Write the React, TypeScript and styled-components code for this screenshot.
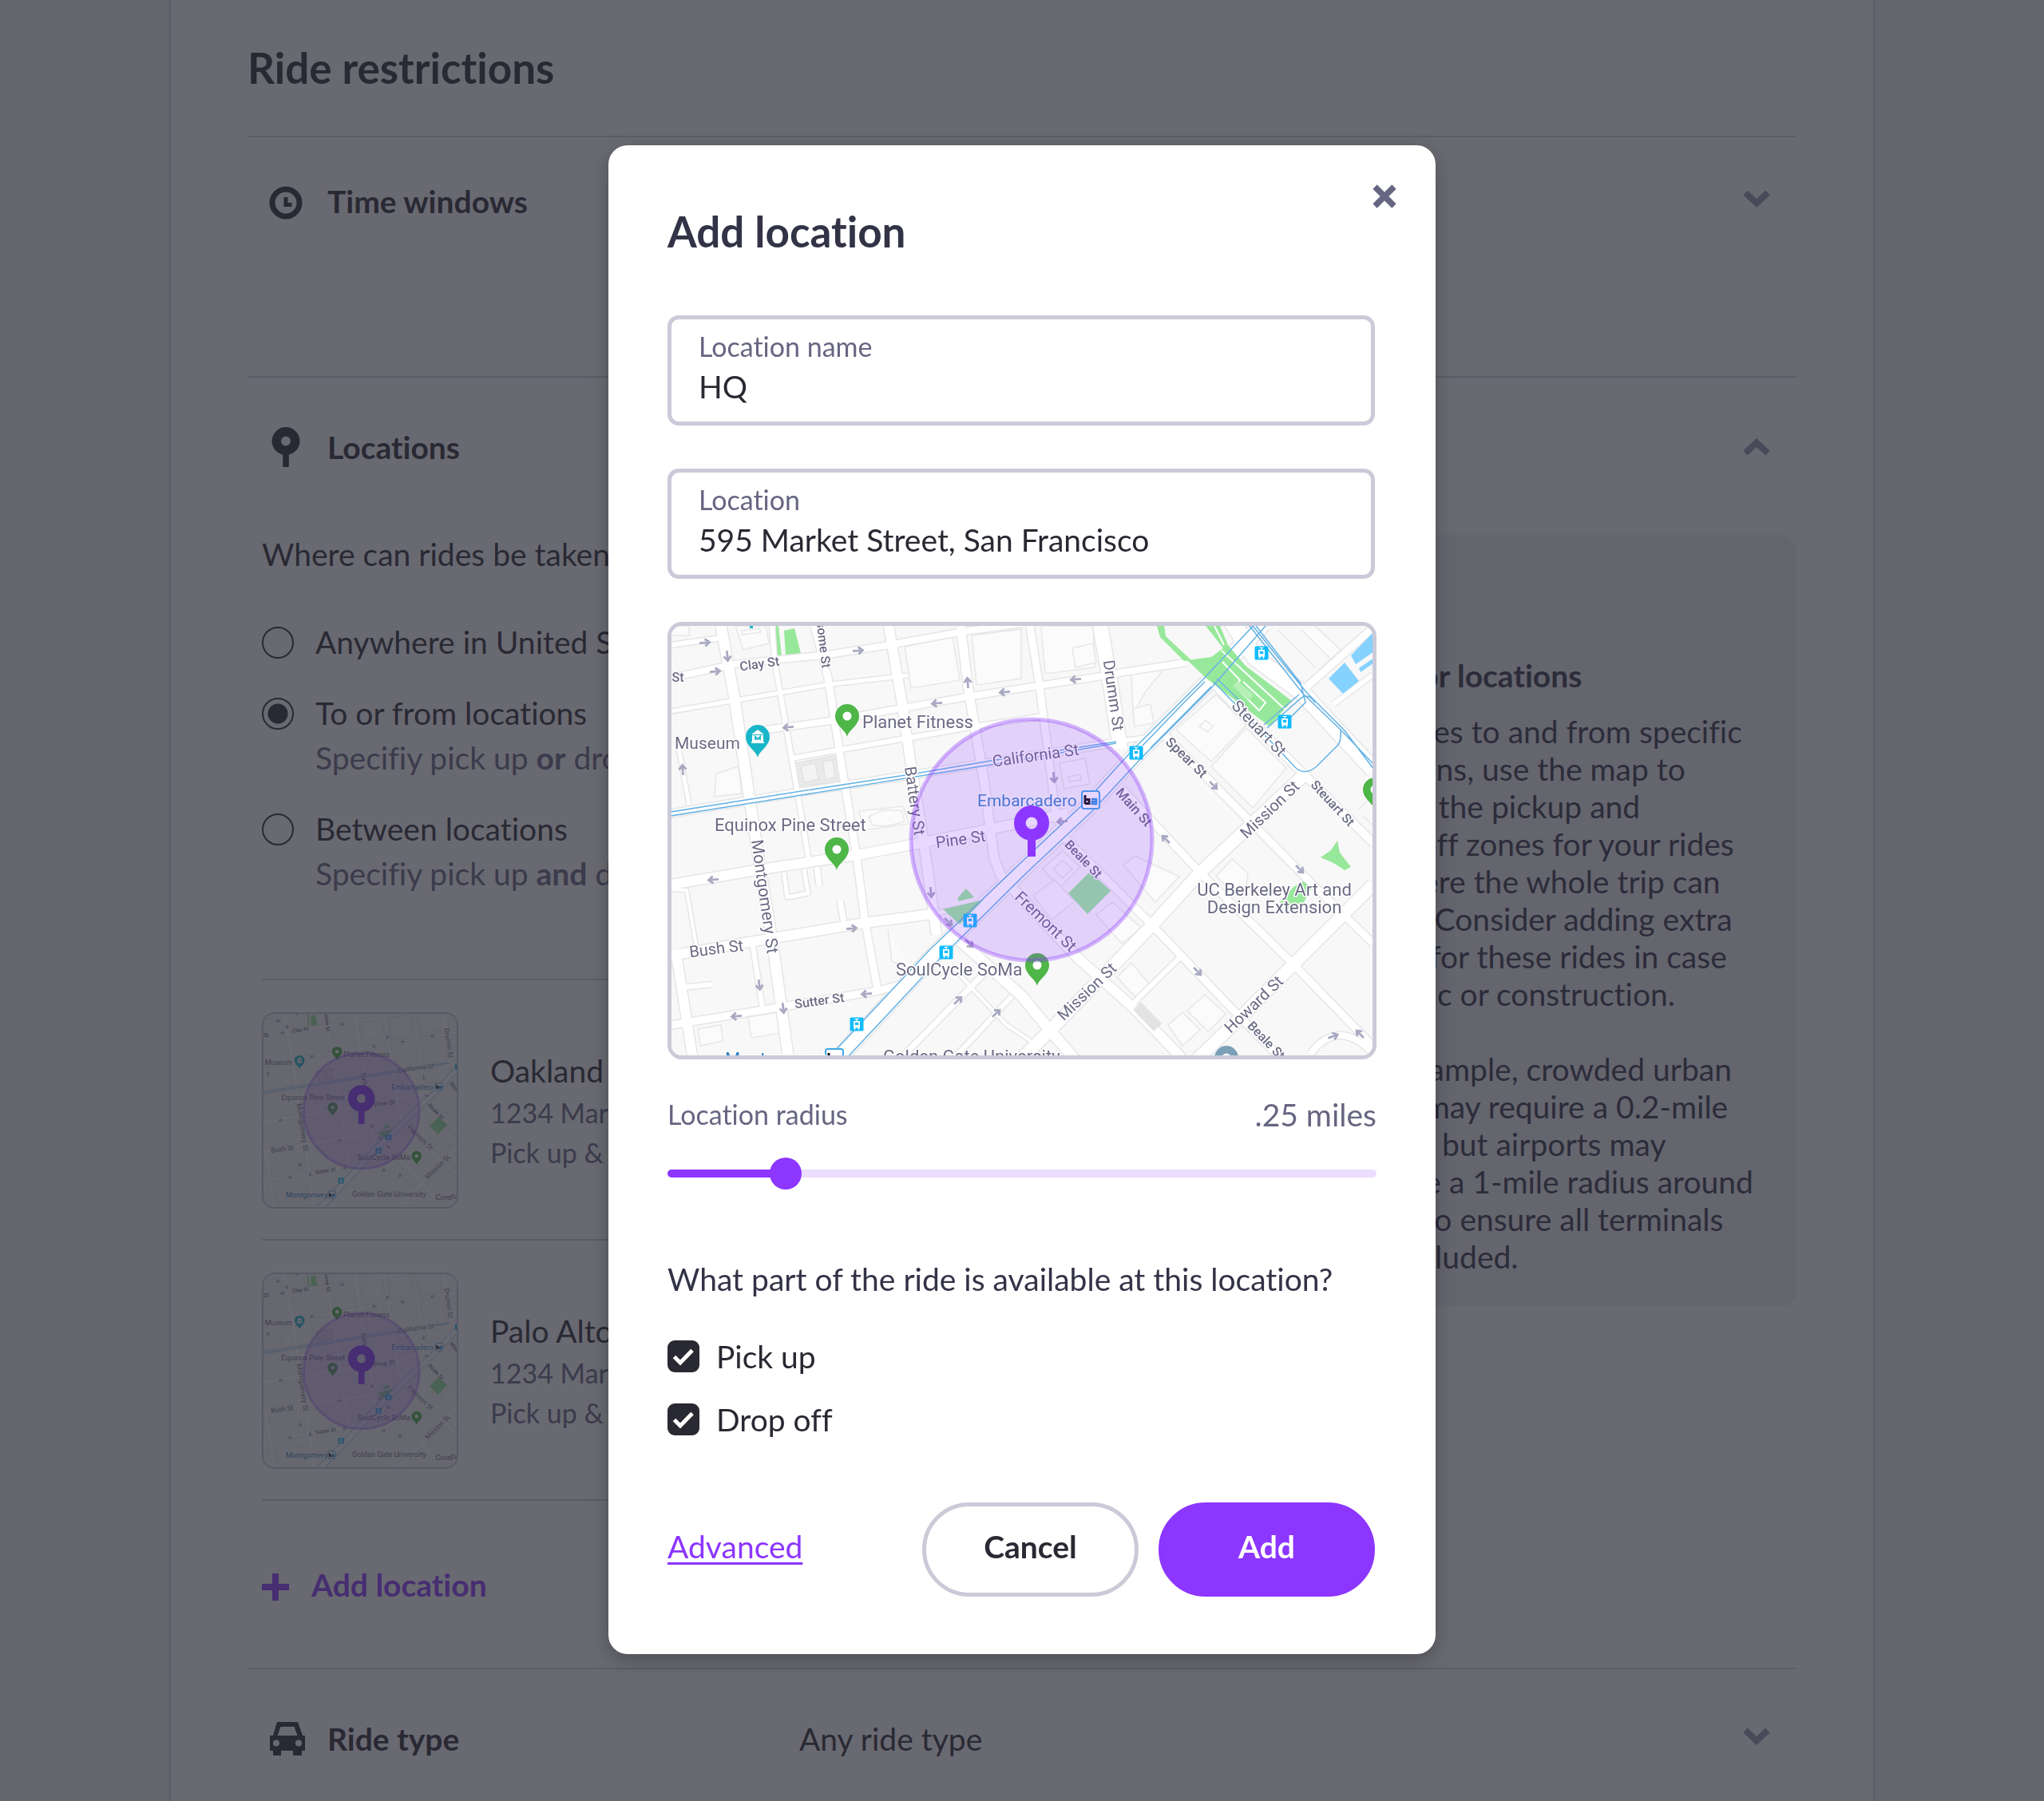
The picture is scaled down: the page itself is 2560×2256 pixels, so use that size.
import React, { useState } from "react";
import styled, { createGlobalStyle } from "styled-components";

const color = {
  ink: "#292933",
  heading: "#333347",
  muted: "#666682",
  line: "#d0d0de",
  control: "#cacad9",
  purple: "#8c36ff",
  lilac: "#ecdcff",
};

const GlobalStyle = createGlobalStyle`
  *, *::before, *::after { box-sizing: border-box; }
  html, body { margin: 0; height: 100%; }
  body {
    background: #f0f0f5;
    color: ${color.ink};
    font-family: Lato, "Open Sans", sans-serif;
    font-size: 39px;
    line-height: 48px;
    font-variant-ligatures: none;
    overflow: hidden;
  }
  h1, h2, h3, p, ul, fieldset, legend { margin: 0; padding: 0; }
  ul { list-style: none; }
  fieldset { border: 0; min-width: 0; }
  button, input { font: inherit; color: inherit; }
  button { cursor: pointer; }
`;

/* ---------- Page ---------- */

const Page = styled.main`
  max-width: 2136px;
  min-height: 100vh;
  margin: 0 auto;
  padding: 0 96px;
  background: #fff;
  border: solid ${color.line};
  border-width: 0 2px;
`;

const PageTitle = styled.h1`
  padding: 53px 0;
  font-size: 53px;
  line-height: 64px;
  font-weight: 700;
  color: ${color.ink};
`;

const Section = styled.section<{ $top: number; $bottom: number }>`
  border-top: 2px solid ${color.line};
  padding: ${(p) => p.$top}px 0 ${(p) => p.$bottom}px;
`;

const SectionHeader = styled.div`
  display: grid;
  grid-template-columns: 48px 563px 1fr 34px;
  column-gap: 28px;
  align-items: center;
  padding: 0 33px 0 24px;

  svg { display: block; }
`;

const SectionTitle = styled.h2`
  font-size: 39px;
  line-height: 48px;
  font-weight: 700;
`;

const ToggleButton = styled.button`
  display: block;
  width: 34px;
  height: 48px;
  padding: 0;
  border: 0;
  background: none;
  color: #9494ad;
`;

const LocationsBody = styled.div`
  display: flex;
  align-items: flex-start;
  justify-content: space-between;
  gap: 60px;
  padding-top: 85px;
`;

const LocationsMain = styled.div`
  flex: 1;
  padding-left: 18px;
`;

const RadioGroup = styled.fieldset`
  legend { margin-bottom: 62px; }
`;

const RadioList = styled.div`
  display: grid;
  gap: 41px;
  margin-bottom: 108px;
`;

const RadioOption = styled.label`
  display: grid;
  grid-template-columns: 40px 1fr;
  column-gap: 27px;
  row-gap: 8px;
`;

const RadioInput = styled.input`
  appearance: none;
  width: 40px;
  height: 40px;
  margin: 5px 0 0;
  border: 2px solid ${color.ink};
  border-radius: 50%;

  &:checked {
    background: radial-gradient(circle, ${color.ink} 12px, transparent 13px);
  }
`;

const RadioHint = styled.span`
  grid-column: 2;
  color: ${color.muted};
`;

const PlaceList = styled.ul`
  border-bottom: 2px solid ${color.line};
`;

const PlaceItem = styled.li`
  display: flex;
  gap: 40px;
  padding: 40px 0 38px;
  border-top: 2px solid ${color.line};
`;

const Thumb = styled.div`
  width: 246px;
  height: 246px;
  border: 2px solid ${color.control};
  border-radius: 16px;
  overflow: hidden;

  svg { display: block; width: 100%; height: 100%; }
`;

const PlaceText = styled.div`
  padding-top: 49px;
`;

const PlaceName = styled.h3`
  margin-bottom: 4px;
  font-size: 39px;
  line-height: 48px;
  font-weight: 400;
`;

const PlaceDetail = styled.p`
  font-size: 34px;
  line-height: 50px;
  color: ${color.muted};
`;

const AddPlaceButton = styled.button`
  display: flex;
  align-items: center;
  gap: 28px;
  margin-top: 81px;
  padding: 0;
  border: 0;
  background: none;
  color: ${color.purple};
  font-weight: 700;
`;

const Tips = styled.aside`
  flex: 0 0 610px;
  padding: 153px 20px 39px 44px;
  border-radius: 20px;
  background: #f2f2f6;
  color: ${color.heading};
  font-size: 39px;
  line-height: 47px;
  white-space: nowrap;

  h3 { margin-bottom: 23px; font-size: 39px; font-weight: 700; }
  p + p { margin-top: 47px; }
`;

/* ---------- Dialog ---------- */

const Backdrop = styled.div`
  position: fixed;
  inset: 0;
  display: flex;
  align-items: flex-start;
  justify-content: center;
  padding-top: 182px;
  background: rgba(41, 41, 53, 0.7);
`;

const Dialog = styled.div`
  position: relative;
  width: 1036px;
  padding: 76px 74px 72px;
  border-radius: 24px;
  background: #fff;
  box-shadow: 0 8px 24px rgba(0, 0, 0, 0.25);
`;

const CloseButton = styled.button`
  position: absolute;
  top: 40px;
  right: 40px;
  width: 48px;
  height: 48px;
  padding: 0;
  border: 0;
  background: none;
  color: ${color.muted};

  svg { display: block; }
`;

const DialogTitle = styled.h2`
  margin-bottom: 73px;
  font-size: 53px;
  line-height: 64px;
  font-weight: 700;
  color: ${color.heading};
`;

const Fields = styled.div`
  display: grid;
  gap: 54px;
  padding-right: 2px;
`;

const Field = styled.label`
  display: grid;
  gap: 6px;
  padding: 14px 34px 20px;
  border: 5px solid ${color.control};
  border-radius: 14px;
`;

const FieldLabel = styled.span`
  font-size: 34px;
  line-height: 40px;
  color: ${color.muted};
`;

const TextInput = styled.input`
  width: 100%;
  height: 48px;
  padding: 0;
  border: 0;
  outline: 0;
  background: none;
`;

const MapFrame = styled.div`
  height: 548px;
  margin-top: 54px;
  border: 5px solid ${color.control};
  border-radius: 18px;
  overflow: hidden;

  svg { display: block; width: 100%; height: 100%; }
`;

const RadiusRow = styled.div`
  display: flex;
  justify-content: space-between;
  margin: 45px 0 30px;
  color: ${color.muted};

  label { font-size: 34px; }
`;

const Range = styled.input<{ $fill: number }>`
  appearance: none;
  display: block;
  width: 100%;
  height: 40px;
  margin: 0;
  background: none;

  &::-webkit-slider-runnable-track {
    height: 10px;
    border-radius: 5px;
    background: linear-gradient(
      to right,
      ${color.purple} ${(p) => p.$fill}%,
      ${color.lilac} ${(p) => p.$fill}%
    );
  }
  &::-webkit-slider-thumb {
    appearance: none;
    width: 40px;
    height: 40px;
    margin-top: -15px;
    border-radius: 50%;
    background: ${color.purple};
  }
`;

const CheckGroup = styled.fieldset`
  margin-top: 88px;

  legend { margin-bottom: 49px; color: ${color.heading}; }
`;

const CheckList = styled.div`
  display: grid;
  justify-items: start;
  gap: 31px;
`;

const CheckOption = styled.label`
  display: flex;
  align-items: center;
  gap: 21px;
`;

const CheckBoxWrap = styled.span`
  position: relative;
  width: 40px;
  height: 40px;

  svg { position: absolute; inset: 0; pointer-events: none; }
`;

const CheckInput = styled.input`
  appearance: none;
  display: block;
  width: 40px;
  height: 40px;
  margin: 0;
  border: 3px solid ${color.ink};
  border-radius: 9px;

  &:checked { background: ${color.ink}; }
`;

const Footer = styled.div`
  display: flex;
  align-items: center;
  gap: 25px;
  margin-top: 80px;
  padding-right: 2px;
`;

const AdvancedLink = styled.a`
  margin-right: auto;
  padding-bottom: 8px;
  color: ${color.purple};
  text-decoration-thickness: 3px;
  text-underline-offset: 5px;
  text-decoration-skip-ink: none;
`;

const PillButton = styled.button<{ $primary?: boolean }>`
  width: 271px;
  height: 118px;
  padding: 0 0 8px;
  border: 5px solid ${(p) => (p.$primary ? color.purple : color.control)};
  border-radius: 59px;
  background: ${(p) => (p.$primary ? color.purple : "#fff")};
  color: ${(p) => (p.$primary ? "#fff" : color.ink)};
  font-weight: 700;
`;

/* ---------- Icons ---------- */

const ClockIcon = () => (
  <svg width="48" height="48" viewBox="0 0 48 48" fill="none" stroke="currentColor">
    <circle cx="24" cy="26" r="17" strokeWidth="7" />
    <path d="M24 19v9.500h7.500" strokeWidth="5" />
  </svg>
);

const PinIcon = () => (
  <svg width="48" height="50" viewBox="0 0 48 50" fill="none" stroke="currentColor">
    <circle cx="24" cy="17.500" r="11.700" strokeWidth="11.600" />
    <path d="M24 31v19" strokeWidth="7.600" />
  </svg>
);

const CarIcon = () => (
  <svg width="48" height="48" viewBox="0 0 48 48" fill="currentColor">
    <path
      fillRule="evenodd"
      d="M13 3h26l6 17h3v19h-4v6H33v-6H18v6H8v-6H4V20h4zM17.500 9L13.500 20H38.500L34.500 9zM12 25.500a4 4 0 1 0 0 8 4 4 0 1 0 0-8zM40 25.500a4 4 0 1 0 0 8 4 4 0 1 0 0-8z"
    />
  </svg>
);

const Chevron = ({ up }: { up?: boolean }) => (
  <svg width="34" height="48" viewBox="0 0 34 48" fill="none" stroke="currentColor" strokeWidth="8">
    <path d={up ? "M3 31.500L17 18.500L31 31.500" : "M3 13.500L17 26.500L31 13.500"} />
  </svg>
);

const PlusIcon = () => (
  <svg width="34" height="48" viewBox="0 0 34 48" stroke="currentColor" strokeWidth="8">
    <path d="M17 10v34M0 27h34" />
  </svg>
);

const CloseIcon = () => (
  <svg width="48" height="48" viewBox="0 0 48 48" stroke="currentColor" strokeWidth="7.500">
    <path d="M12 12l24 24M36 12L12 36" />
  </svg>
);

const CheckIcon = () => (
  <svg width="40" height="40" viewBox="0 0 40 40" fill="none" stroke="#fff" strokeWidth="5">
    <path d="M8.500 20.500l7.500 7.500L31 12.500" />
  </svg>
);

/* ---------- Map ---------- */

type Road = [string, number];

const roads: Road[] = [
  ["M62 0L79 91L96 205L112 309L126 394L146 538L152 580", 13],
  ["M9 153L22 224", 5],
  ["M-4 330L19 331L31 401", 4],
  ["M5 405L26 538L33 580", 12],
  ["M126 0L129 43L156 198L172 294", 6],
  ["M179 0L196 65L212 168L232 290L242 368L259 461", 9],
  ["M272 0L289 98L299 168L316 272L332 387", 12],
  ["M362 0L372 80L392 198L404 290L412 312L430 330", 11],
  ["M449 0L461 76L472 161L482 242L500 262", 9],
  ["M537 0L549 68L562 154", 18],
  ["M-1 24L62 15", 6],
  ["M-1 65L79 48L196 36L272 24L366 7L440 -3", 8],
  ["M-1 107L82 93L192 74L296 62", 5],
  ["M112 131L206 118L289 103L376 88L459 75L539 63L566 58L644 46", 8],
  ["M150 166L212 155L299 140L379 126L466 113", 6],
  ["M565 144L620 136", 5],
  ["M-1 235L156 209L299 187L406 170L557 146", 9],
  ["M-1 324L112 305L232 287L312 272L406 253L496 235", 12],
  ["M-1 413L86 398L242 372L326 361", 12],
  ["M326 361L380 350L412 322", 5],
  ["M-1 500L146 476L259 457L300 446", 9],
  ["M102 401L114 479", 6],
  ["M182 302L185 325", 7],
  ["M211 344L216 372", 7],
  ["M141 309L145 340L171 335L166 305", 5],
  ["M12 453L51 449", 6],
  ["M362 395L439 464L476 509L520 560", 13],
  ["M414 318L429 331L509 416L579 479L636 538L670 580", 12],
  ["M480 252L492 265L602 375L712 490L756 535", 9],
  ["M562 202L662 309L779 424L879 527", 9],
  ["M616 135L722 242L806 327L879 398", 9],
  ["M679 72L782 176L879 272", 10],
  ["M700 -8L731 40L789 83L879 180", 20],
  ["M796 76L879 2", 9],
  ["M829 98L879 61", 6],
  ["M792 187L662 309L602 375L569 409L472 509L400 580", 15],
  ["M879 324L779 424L702 501L630 570", 15],
  ["M284 545L392 435", 7],
  ["M350 545L382 512L426 464", 6],
  ["M350 425L382 460L420 500L450 520", 4],
  ["M636 416L579 472", 6],
  ["M800 536Q836 490 879 536", 8],
  ["M170 580L212 538L329 412L439 305L522 227L582 161L669 74L740 -2", 20],
];

const buildings = [
  "M-1 0H22V12H-1z", "M80 0L118 0L122 22L90 30z", "M87 6L110 3L112 8L89 11z",
  "M292 26L352 14L361 68L300 78z", "M376 12L438 4V66L382 74z", "M463 0H528L530 52L468 60z",
  "M502 28L528 22L532 46L506 52z", "M56 185L84 176L88 210L54 214z", "M235 232L290 226L297 248L240 256z",
  "M247 239L264 231L288 231L292 245L270 251L252 250z", "M33 505L62 500L64 520L36 526z",
  "M96 490L134 484L138 510L100 516z", "M486 172L518 166L524 198L492 204z", "M497 189L512 186L513 193L498 195z",
  "M576 60L622 48L594 82L578 110z", "M578 104L600 98L604 122L580 126z", "M632 130L682 86L720 124L676 170z",
  "M676 176L720 128L770 178L728 228z", "M661 126L669 118L678 126L671 133z", "M465 304L490 282L512 302L486 328z",
  "M478 304L490 294L502 304L490 316z", "M453 338L480 318L505 345L476 368z", "M566 300L580 288L636 314L606 346z",
  "M532 362L552 346L588 378L564 398z", "M682 314L702 292L722 310L720 326L700 330z", "M558 440L576 422L598 448L582 466z",
  "M646 482L668 462L694 486L672 508z", "M622 500L640 484L662 506L640 526z", "M812 54L830 38M760 6L806 52",
  "M790 6L826 42L838 30L806 0", "M860 230L878 214M866 238L879 250", "M271 380L276 420L300 430",
];

type Label = { t: string; x: number; y: number; s?: number; r?: number; a?: "start" | "middle"; c?: string };

const labels: Label[] = [
  { t: "Clay St", x: 111, y: 53, s: 16, r: -8 },
  { t: "St", x: 8, y: 70, s: 16 },
  { t: "some St", x: 185, y: 24, s: 16, r: 83 },
  { t: "Museum", x: 4, y: 154, s: 21, a: "start" },
  { t: "Planet Fitness", x: 239, y: 128, a: "start" },
  { t: "California St", x: 457, y: 169, s: 20, r: -8 },
  { t: "Drumm St", x: 547, y: 88, s: 20, r: 82 },
  { t: "Battery St", x: 298, y: 220, s: 20, r: 82 },
  { t: "Embarcadero", x: 383, y: 226, s: 21, a: "start", c: "#3a86c8" },
  { t: "Equinox Pine Street", x: 54, y: 257, a: "start" },
  { t: "Montgomery St", x: 110, y: 340, s: 21, r: 82 },
  { t: "Pine St", x: 363, y: 274, s: 20, r: -8 },
  { t: "Bush St", x: 57, y: 411, s: 20, r: -7 },
  { t: "Sutter St", x: 186, y: 475, s: 16, r: -8 },
  { t: "SoulCycle SoMa", x: 281, y: 438, a: "start" },
  { t: "Montgomery", x: 67, y: 550, a: "start", c: "#2b7fc0" },
  { t: "Golden Gate University", x: 265, y: 547, a: "start" },
  { t: "CorePower Yoga", x: 514, y: 557, a: "start" },
  { t: "Steuart St", x: 731, y: 133, s: 20, r: 46 },
  { t: "Spear St", x: 641, y: 169, s: 17, r: 44 },
  { t: "Main St", x: 575, y: 231, s: 17, r: 48 },
  { t: "Beale St", x: 512, y: 296, s: 16, r: 46 },
  { t: "Fremont St", x: 464, y: 375, s: 20, r: 44 },
  { t: "Mission St", x: 754, y: 235, s: 20, r: -44 },
  { t: "Mission St", x: 525, y: 463, s: 20, r: -44 },
  { t: "Steuart St", x: 824, y: 226, s: 16, r: 47 },
  { t: "UC Berkeley Art and", x: 755, y: 338 },
  { t: "Design Extension", x: 755, y: 360 },
  { t: "Howard St", x: 734, y: 479, s: 20, r: -44 },
  { t: "Beale St", x: 741, y: 523, s: 16, r: 46 },
];

const arrows: [number, number, number][] = [
  [42, 21, -5], [70, 38, 85], [55, 57, -5], [234, 31, -5], [371, 71, -94], [417, 83, 175], [332, 97, 175],
  [146, 127, 175], [14, 180, -95], [52, 318, 175], [325, 334, 85], [226, 379, -5], [110, 450, 83], [244, 461, 175],
  [140, 479, 83], [81, 489, 175], [359, 469, -44], [407, 485, -44], [506, 67, 175], [479, 190, 85], [489, 245, 175],
  [679, 200, 45], [619, 267, -135], [787, 305, 45], [659, 433, 45], [829, 514, -20], [862, 511, -135],
  [347, 371, 45], [373, 398, 45],
];

const tramStops: [number, number][] = [[374, 369], [344, 409], [232, 499], [582, 159], [739, 34], [768, 120]];

const PoiPin = ({ x, y, fill = "#4fb648", museum }: { x: number; y: number; fill?: string; museum?: boolean }) => (
  <g transform={`translate(${x} ${y})`}>
    <path d="M0 26C-2 17-15 12-15 0A15 15 0 1 1 15 0C15 12 2 17 0 26z" fill={fill} />
    {museum ? (
      <>
        <path d="M-8-3L0-9L8-3zM-7-2H7V6H-7zM-8 6H8V8H-8z" fill="#fff" />
        <path d="M-3 4V0L0 3L3 0V4" fill="none" stroke={fill} strokeWidth="1.800" />
      </>
    ) : (
      <circle r="5.500" fill="#fff" />
    )}
  </g>
);

const BartSign = ({ x, y }: { x: number; y: number }) => (
  <g transform={`translate(${x} ${y})`} fill="none">
    <rect x="-11" y="-11" width="22" height="22" rx="3" fill="#fff" stroke="#3fa9e8" strokeWidth="2" />
    <path d="M-7-6V5M-7 4.500H-2V-0.500H-7" stroke="#111" strokeWidth="3" />
    <path d="M1-1H7V5H2V2H7" stroke="#2d93d8" strokeWidth="2.600" />
  </g>
);

type ZoneProps = { cx: number; cy: number; r: number; ring: number; pinY: number; pin: number };

const Zone = ({ cx, cy, r, ring, pinY, pin }: ZoneProps) => (
  <g>
    <circle cx={cx} cy={cy} r={r} fill="#8c36ff" fillOpacity="0.200" />
    <circle cx={cx} cy={cy} r={r} fill="none" stroke="#8c36ff" strokeOpacity="0.350" strokeWidth={ring} />
    <g transform={`translate(${cx} ${pinY}) scale(${pin})`} fill="none" stroke="#8c36ff">
      <circle r="14.700" strokeWidth="14.600" />
      <path d="M0 18V42" strokeWidth="10" />
    </g>
  </g>
);

const CityMap = ({ viewBox, zone }: { viewBox: string; zone: ZoneProps }) => (
  <svg viewBox={viewBox} preserveAspectRatio="xMidYMid slice" role="img" aria-label="Map of the pickup zone">
    <rect width="880" height="580" fill="#f8f8f8" />
    <g fill="#fbfbfb" stroke="#e7e7e7" strokeWidth="1.500">
      {buildings.map((d) => <path key={d} d={d} />)}
    </g>
    <g fill="#e9e9e9" stroke="#dedede">
      <path d="M155 172L207 162L212 195L160 201z" />
      <path d="M162 176L180 172L184 192L166 196zM190 170L202 168L205 190L192 192z" fill="#f3f3f3" />
    </g>
    <g fill="#98e89b">
      <path d="M141 6L154 3L162 34L143 37z" />
      <path d="M131 0H134L138 38L132 37L128 17z" />
      <path d="M834 269L837 284L851 302L843 306L829 297L813 290L826 281z" />
    </g>
    <g fill="none" stroke="#e6e6e8" strokeLinejoin="round">
      {roads.map(([d, w]) => <path key={d} d={d} strokeWidth={w + 3} />)}
    </g>
    <g fill="none" stroke="#fff" strokeLinejoin="round">
      {roads.map(([d, w]) => <path key={d} d={d} strokeWidth={w} />)}
    </g>
    <path d="M583 476L609 503" stroke="#e3e3e3" strokeWidth="14" />
    <g fill="#98e89b">
      <path d="M524 308L550 332L521 361L497 335z" />
      <path d="M340 355L391 343L361 374zM359 340L369 329L379 340L359 345z" />
      <path d="M791 320L802 328L792 346L772 353L762 346L779 327z" />
      <path d="M669 0H687L697 24L719 50L777 94L749 126L669 65L646 43L676 39L691 28z" />
      <path d="M608 0H617L619 13L651 43L642 44L612 14z" />
    </g>
    <g fill="none" stroke="#fff" strokeWidth="2">
      <path d="M680 0L692 24M689 31L769 105M690 45L712 68L706 76L736 106L744 96L716 70" />
      <path d="M706 72L726 90" stroke="#b5efb6" strokeWidth="9" />
    </g>
    <g fill="#86d2ff">
      <path d="M851 37L857 48L880 32V7z" />
      <path d="M823 66L843 46L861 69L841 85z" />
      <path d="M861 53L880 40V46L863 58z" />
      <path d="M98 0H102V3H98z" fill="#19b6c9" />
    </g>
    <g fill="none" stroke="#69b4e4" strokeWidth="1.600">
      <path d="M-1 233L156 208L299 186L406 168L557 145" />
      <path d="M-1 238L156 213L299 190L406 173L557 147" />
      <path d="M163 574L206 531L323 406L435 299L518 221L577 156L664 69L734 -6" />
      <path d="M177 586L218 543L335 418L443 311L526 233L588 166L675 79L744 0" />
      <path d="M590 150L640 98L668 70M600 153L676 76" />
      <path d="M724 0L791 85L839 131L880 174M728 0L795 83L843 131L880 180M732 0L788 72L794 96L762 128" />
      <path d="M679 70L706 98L766 161L782 178Q794 188 808 176L834 150Q839 145 838 131" />
      <path d="M683 66L712 94M746 128L789 90Q798 84 806 96M742 124L786 86" />
    </g>
    <g fill="none" stroke="#a9a9c2" strokeWidth="2.800">
      {arrows.map(([x, y, r]) => (
        <path key={`${x}-${y}`} d="M-7 0H5M0-4.500L5.500 0L0 4.500" transform={`translate(${x} ${y}) rotate(${r})`} />
      ))}
    </g>
    {tramStops.map(([x, y]) => (
      <g key={`${x}-${y}`} transform={`translate(${x} ${y})`}>
        <rect x="-8.500" y="-8.500" width="17" height="17" rx="1.500" fill="#10bcff" />
        <path d="M-2.500-6.500H2.500M0-6.500V-3" stroke="#fff" strokeWidth="1.200" />
        <path fillRule="evenodd" d="M-4-4H4V4.500H-4zM-2.200-2.200V1H2.200V-2.200z" fill="#fff" />
        <path d="M-2.500 4V6.800M2.500 4V6.800" stroke="#fff" strokeWidth="1.600" />
      </g>
    ))}
    <BartSign x={525} y={218} />
    <BartSign x={204} y={541} />
    <PoiPin x={220} y={113} />
    <PoiPin x={207} y={280} />
    <PoiPin x={458} y={425} />
    <PoiPin x={881} y={205} />
    <PoiPin x={108} y={139} fill="#19b6c9" museum />
    <PoiPin x={695} y={541} fill="#7ba0b8" />
    <g fontFamily="Roboto, sans-serif" stroke="#fff" strokeWidth="3" strokeLinejoin="round" paintOrder="stroke">
      {labels.map((l) => (
        <text
          key={`${l.t}-${l.x}`}
          transform={`translate(${l.x} ${l.y}) rotate(${l.r ?? 0})`}
          fontSize={l.s ?? 22}
          fontWeight={l.s && l.s < 18 ? 500 : 400}
          textAnchor={l.a ?? "middle"}
          fill={l.c ?? "#6a6a84"}
        >
          {l.t}
        </text>
      ))}
    </g>
    <Zone {...zone} />
  </svg>
);

/* ---------- App ---------- */

const places = [
  { name: "Oakland office", address: "1234 Market Street", parts: "Pick up & drop off" },
  { name: "Palo Alto office", address: "1234 Market Street", parts: "Pick up & drop off" },
];

const thumbZone = { cx: 293, cy: 290, r: 173, ring: 7, pinY: 253, pin: 1.82 };
const dialogZone = { cx: 451, cy: 268, r: 151, ring: 5, pinY: 247, pin: 1 };

const MAX_RADIUS = 1.65;

export default function App() {
  const [scope, setScope] = useState("either");
  const [name, setName] = useState("HQ");
  const [address, setAddress] = useState("595 Market Street, San Francisco");
  const [radius, setRadius] = useState(0.25);

  return (
    <>
      <GlobalStyle />
      <Page>
        <PageTitle>Ride restrictions</PageTitle>

        <Section $top={56} $bottom={195}>
          <SectionHeader>
            <ClockIcon />
            <SectionTitle>Time windows</SectionTitle>
            <span />
            <ToggleButton aria-label="Expand time windows"><Chevron /></ToggleButton>
          </SectionHeader>
        </Section>

        <Section $top={62} $bottom={80}>
          <SectionHeader>
            <PinIcon />
            <SectionTitle>Locations</SectionTitle>
            <span />
            <ToggleButton aria-label="Collapse locations"><Chevron up /></ToggleButton>
          </SectionHeader>

          <LocationsBody>
            <LocationsMain>
              <RadioGroup>
                <legend>Where can rides be taken?</legend>
                <RadioList>
                  <RadioOption>
                    <RadioInput type="radio" name="scope" checked={scope === "any"} onChange={() => setScope("any")} />
                    <span>Anywhere in United States</span>
                  </RadioOption>
                  <RadioOption>
                    <RadioInput type="radio" name="scope" checked={scope === "either"} onChange={() => setScope("either")} />
                    <span>To or from locations</span>
                    <RadioHint>Specifiy pick up <b>or</b> drop off locations</RadioHint>
                  </RadioOption>
                  <RadioOption>
                    <RadioInput type="radio" name="scope" checked={scope === "both"} onChange={() => setScope("both")} />
                    <span>Between locations</span>
                    <RadioHint>Specifiy pick up <b>and</b> drop off locations</RadioHint>
                  </RadioOption>
                </RadioList>
              </RadioGroup>

              <PlaceList>
                {places.map((place) => (
                  <PlaceItem key={place.name}>
                    <Thumb><CityMap viewBox="0 0 578 578" zone={thumbZone} /></Thumb>
                    <PlaceText>
                      <PlaceName>{place.name}</PlaceName>
                      <PlaceDetail>{place.address}</PlaceDetail>
                      <PlaceDetail>{place.parts}</PlaceDetail>
                    </PlaceText>
                  </PlaceItem>
                ))}
              </PlaceList>

              <AddPlaceButton type="button"><PlusIcon />Add location</AddPlaceButton>
            </LocationsMain>

            <Tips>
              <h3>Tips for locations</h3>
              <p>
                For rides to and from specific<br />
                locations, use the map to<br />
                define the pickup and<br />
                drop-off zones for your rides<br />
                or where the whole trip can<br />
                occur. Consider adding extra<br />
                space for these rides in case<br />
                if traffic or construction.
              </p>
              <p>
                For example, crowded urban<br />
                areas may require a 0.2-mile<br />
                radius, but airports may<br />
                require a 1-mile radius around<br />
                them to ensure all terminals<br />
                are included.
              </p>
            </Tips>
          </LocationsBody>
        </Section>

        <Section $top={63} $bottom={54}>
          <SectionHeader>
            <CarIcon />
            <SectionTitle>Ride type</SectionTitle>
            <span>Any ride type</span>
            <ToggleButton aria-label="Expand ride type"><Chevron /></ToggleButton>
          </SectionHeader>
        </Section>
      </Page>

      <Backdrop>
        <Dialog role="dialog" aria-modal="true" aria-labelledby="dialog-title">
          <CloseButton type="button" aria-label="Close"><CloseIcon /></CloseButton>
          <DialogTitle id="dialog-title">Add location</DialogTitle>

          <Fields>
            <Field>
              <FieldLabel>Location name</FieldLabel>
              <TextInput type="text" value={name} onChange={(e) => setName(e.target.value)} />
            </Field>
            <Field>
              <FieldLabel>Location</FieldLabel>
              <TextInput type="text" value={address} onChange={(e) => setAddress(e.target.value)} />
            </Field>
          </Fields>

          <MapFrame><CityMap viewBox="0 0 878 538" zone={dialogZone} /></MapFrame>

          <RadiusRow>
            <label htmlFor="radius">Location radius</label>
            <output htmlFor="radius">{String(radius).replace(/^0/, "")} miles</output>
          </RadiusRow>
          <Range
            id="radius"
            type="range"
            min={0}
            max={MAX_RADIUS}
            step={0.05}
            value={radius}
            $fill={(radius / MAX_RADIUS) * 100}
            onChange={(e) => setRadius(Number(e.target.value))}
          />

          <CheckGroup>
            <legend>What part of the ride is available at this location?</legend>
            <CheckList>
              {["Pick up", "Drop off"].map((part) => (
                <CheckOption key={part}>
                  <CheckBoxWrap>
                    <CheckInput type="checkbox" defaultChecked />
                    <CheckIcon />
                  </CheckBoxWrap>
                  {part}
                </CheckOption>
              ))}
            </CheckList>
          </CheckGroup>

          <Footer>
            <AdvancedLink href="#advanced">Advanced</AdvancedLink>
            <PillButton type="button">Cancel</PillButton>
            <PillButton type="button" $primary>Add</PillButton>
          </Footer>
        </Dialog>
      </Backdrop>
    </>
  );
}
